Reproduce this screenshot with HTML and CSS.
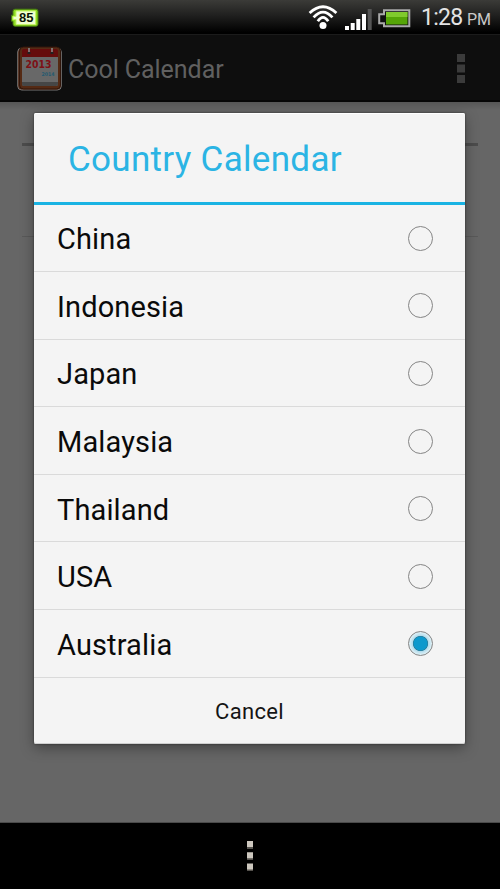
FILE: index.html
```
<!DOCTYPE html>
<html lang="en">
<head>
<meta charset="utf-8">
<title>Cool Calendar</title>
<link rel="stylesheet" href="styles.css">
</head>
<body>
<div class="phone">
  <header class="status">
    <svg class="charge" width="29" height="20" viewBox="0 0 29 20">
      <path d="M4 1.2h21q2 0 2 2v13q0 2-2 2H4q-2 0-2-2v-3H.5v-6H2v-4q0-2 2-2z" fill="#8edb20" stroke="#467b10"/>
      <path d="M5 3h19.5v13.5H5v-5H2v-3h3z" fill="#efffcf" stroke="#c6f56a"/>
      <text class="charge-text" x="15.2" y="14.4" text-anchor="middle">85</text>
    </svg>
    <div class="indicators">
      <svg width="30" height="26" viewBox="0 0 30 26" fill="none" stroke="#fff" stroke-width="2.8">
        <path d="M1.6 9Q15-3.4 28.4 9M5.6 13.4Q15 2.8 24.4 13.4M9.8 17.2Q15 9.4 20.2 17.2"/>
        <circle cx="15" cy="21.4" r="3.5" fill="#fff" stroke="none"/>
      </svg>
      <svg class="signal" width="27" height="22" viewBox="0 0 27 22" fill="#fff">
        <path d="M0 17h4v4H0zM5.7 14h4v7h-4zM11.3 10h4v11h-4zM17 5h4v16h-4z"/>
        <path d="M22.7 0h4v21h-4z" fill="#555"/>
      </svg>
      <svg class="battery" width="33" height="19" viewBox="0 0 33 19">
        <path d="M6 1.2h25.3v16H6v-3H1.2v-9H6z" fill="#111" stroke="#aaa" stroke-width="2"/>
        <path d="M8 3h21.5v12.5H8z" fill="#55a507"/>
        <path d="M8 3h21.5v5H8z" fill="#80ca2d"/>
      </svg>
    </div>
    <div class="clock"><span class="time">1:28</span><span class="meridiem">PM</span></div>
  </header>

  <div class="action-bar">
    <svg class="app-icon" width="46" height="46" viewBox="0 0 46 46">
      <rect x=".7" y="2" width="43.6" height="42" rx="4" fill="#522815" stroke="#777" />
      <rect x="2.5" y="1" width="41" height="42" rx="4" fill="#552a14" stroke="#30150a"/>
      <path d="M5 11h36v27q0 2-2 2H7q-2 0-2-2z" fill="#686868"/>
      <path d="M5 36h36v2q0 2-2 2H7q-2 0-2-2z" fill="#464646"/>
      <path d="M7 3h32q2 0 2 2v6H5V5q0-2 2-2z" fill="#650c0c"/>
      <path d="M12 2v5M35 2v5" stroke="#888" stroke-width="1.6"/>
      <path d="M10.5 7h3M33.5 7h3" stroke="#222" stroke-width="2"/>
      <text class="year" x="8.5" y="22.2" textLength="26" lengthAdjust="spacingAndGlyphs">2013</text>
      <text class="next-year" x="24.5" y="30.4" textLength="13" lengthAdjust="spacingAndGlyphs">2014</text>
    </svg>
    <span class="app-name">Cool Calendar</span>
    <svg class="overflow" width="8" height="30" viewBox="0 0 8 30" fill="#3b3b3b">
      <path d="M0 0h8v8H0zM0 10.5h8v8H0zM0 21h8v8H0z"/>
    </svg>
  </div>

  <main class="screen">
    <div class="rule thick"></div>
    <div class="rule thin"></div>
  </main>

  <section class="dialog">
    <h1 class="title"><span>Country Calendar</span></h1>
    <ul class="list">
      <li class="row"><span>China</span><i class="radio"></i></li>
      <li class="row"><span>Indonesia</span><i class="radio"></i></li>
      <li class="row"><span>Japan</span><i class="radio"></i></li>
      <li class="row"><span>Malaysia</span><i class="radio"></i></li>
      <li class="row"><span>Thailand</span><i class="radio"></i></li>
      <li class="row"><span>USA</span><i class="radio"></i></li>
      <li class="row"><span>Australia</span><i class="radio checked"></i></li>
    </ul>
    <div class="cancel"><span>Cancel</span></div>
  </section>

  <footer class="nav">
    <svg width="6" height="32" viewBox="0 0 6 32">
      <path d="M0 2h6v6H0zM0 13h6v6H0zM0 24h6v6H0z" fill="#55524d"/>
      <path d="M0 0h6v6H0zM0 11.3h6v6H0zM0 22.5h6v6H0z" fill="#cdc8bf"/>
    </svg>
  </footer>
</div>
</body>
</html>
```

FILE: styles.css
```
* { box-sizing: border-box; }

body {
  margin: 0;
  font-family: Roboto, "Liberation Sans", sans-serif;
  background: #000;
}

.phone {
  position: relative;
  width: 500px;
  height: 889px;
  display: flex;
  flex-direction: column;
  overflow: hidden;
}

.status {
  height: 34px;
  flex: none;
  display: flex;
  align-items: flex-start;
  padding: 0 9px 0 11px;
  background: linear-gradient(#3b3b38, #20201f 45%, #000 95%);
}

.charge { margin-top: 8px; }

.charge-text {
  font: bold 13px "Liberation Sans", sans-serif;
  fill: #0c1505;
}

.indicators {
  display: flex;
  margin: 4px 0 0 auto;
}

.signal { margin: 5px 0 0 7px; }
.battery { margin: 5px 0 0 6px; }

.clock {
  display: flex;
  align-items: baseline;
  margin-left: 10px;
  line-height: 36px;
  color: #e4e4e4;
}

.time {
  width: 46px;
  font-size: 23px;
  letter-spacing: -0.7px;
  white-space: nowrap;
}

.meridiem {
  width: 24px;
  font-size: 16px;
  color: #c8c8c8;
}

.action-bar {
  height: 68px;
  flex: none;
  display: flex;
  align-items: center;
  padding: 2px 35px 0 17px;
  background: #0e0e0e;
  border-top: 1px solid #1b1b1b;
  border-bottom: 2px solid #060606;
}

.app-icon { flex: none; }

.year {
  font: bold 10.5px "DejaVu Sans", sans-serif;
  fill: #7d1015;
}

.next-year {
  font: bold 5px "DejaVu Sans", sans-serif;
  fill: #245a70;
}

.app-name {
  margin-left: 5px;
  padding-top: 2px;
  font-size: 25px;
  letter-spacing: -0.05px;
  color: #606060;
}

.overflow { margin-left: auto; }

.screen {
  flex: 1;
  padding: 41px 22px 0;
  background: linear-gradient(#565656, #666 8px);
  border-bottom: 1px solid #4a4a4a;
}

.rule.thick {
  height: 3px;
  background: #4c4c4c;
}

.rule.thin {
  height: 1px;
  margin-top: 90px;
  background: #595959;
}

.dialog {
  position: absolute;
  left: 34px;
  top: 113px;
  width: 431px;
  height: 631px;
  display: flex;
  flex-direction: column;
  background: #f4f4f4;
  border-radius: 2px;
  box-shadow: 0 0 2px #282828, 0 4px 14px rgba(0, 0, 0, 0.35), inset 0 -1px #cfcfcf, inset 0 1px #fff;
}

.title {
  flex: none;
  height: 91.5px;
  margin: 0;
  padding: 0 34px;
  border-bottom: 3px solid #19b3e3;
  font-size: 35px;
  font-weight: 400;
  line-height: 94px;
  letter-spacing: 0.3px;
  color: #2bb4e4;
}

.list {
  flex: none;
  margin: 0;
  padding: 0;
  list-style: none;
}

.row {
  height: 67.6px;
  display: flex;
  align-items: center;
  justify-content: space-between;
  padding: 1px 32px 0 23px;
  border-bottom: 1px solid #dadada;
  font-size: 29px;
  letter-spacing: 0.13px;
  color: #0a0a0a;
}

.row span { padding-top: 2px; }

.radio {
  width: 25px;
  height: 25px;
  border: 1.5px solid #858585;
  border-radius: 50%;
}

.radio.checked {
  background: radial-gradient(circle, #0c99cd 6.5px, #277f9e 7.2px, #b4dcec 8px, #dceff5 11px);
}

.cancel {
  flex: 1;
  display: flex;
  align-items: center;
  justify-content: center;
  padding-top: 2px;
  font-size: 22px;
  letter-spacing: 0.3px;
  color: #141414;
}

.nav {
  height: 66px;
  flex: none;
  display: flex;
  justify-content: center;
  padding-top: 18px;
  background: #000;
}
```
